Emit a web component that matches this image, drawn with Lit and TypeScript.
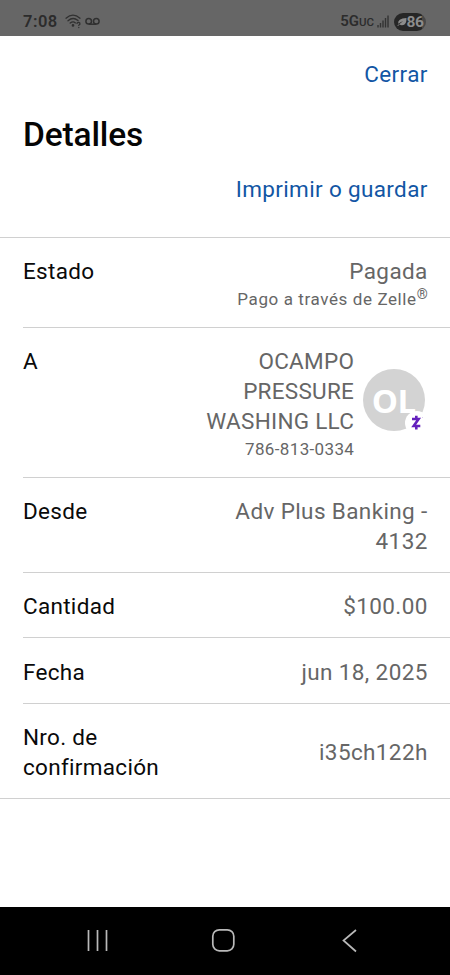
import { LitElement, html, css } from "lit";
import { customElement } from "lit/decorators.js";

@customElement("status-bar")
class StatusBar extends LitElement {
  static styles = css`
    :host { display: flex; flex: none; height: 35.5px; box-sizing: border-box; padding: 8px 24px 0 23px; background: #666; color: #2c2c2c; justify-content: space-between; align-items: center; font-family: Roboto, sans-serif; }
    .side { display: flex; align-items: center; }
    .time { font-size: 16.5px; font-weight: 600; letter-spacing: 0.5px; line-height: 18px; }
    .wifi { margin-left: 7px; }
    .vm { margin-left: 2px; }
    .net { font-size: 15px; font-weight: 600; line-height: 18px; }
    .uc { font-size: 11.5px; font-weight: 500; }
    .bars { margin-left: 3px; }
    .batt { margin-left: 5px; width: 32px; height: 18px; border-radius: 9px; background: linear-gradient(90deg, #262626 86%, #484848 86%); color: #8c8c8c; display: flex; align-items: center; justify-content: center; font-size: 15.5px; font-weight: 700; line-height: 18px; letter-spacing: -0.4px; }
  `;
  render() {
    return html`
      <div class="side">
        <span class="time">7:08</span>
        <svg class="wifi" width="18" height="15" viewBox="0 0 18 15" fill="none" stroke="#303030" stroke-width="1.3" stroke-linecap="round">
          <path d="M1 4.2Q8 -1.8 15 4.2M3 6.8Q8 2.4 13 6.6M5.2 9.1Q8 6.9 10.4 8.9" />
          <circle cx="8" cy="11.4" r="0.7" fill="#303030" />
          <path d="M12 9.3Q13.5 7.7 14.8 9Q15.5 10.3 13.8 11.3M13.8 13.4v.1" />
        </svg>
        <svg class="vm" width="15" height="9" viewBox="0 0 15 9" fill="none" stroke="#303030" stroke-width="1.5">
          <circle cx="3.7" cy="4.3" r="2.8" /><circle cx="11.3" cy="4.3" r="2.8" /><path d="M3.7 7.2h7.6" />
        </svg>
      </div>
      <div class="side">
        <span class="net">5G<span class="uc">UC</span></span>
        <svg class="bars" width="12" height="13" viewBox="0 0 12 13" stroke="#333" stroke-width="1.4">
          <path d="M1 12.5V10M3.5 12.5V8M6 12.5V5.5M8.5 12.5V3M11 12.5V.5" />
        </svg>
        <span class="batt">
          <svg width="10" height="10" viewBox="0 0 10 10"><path d="M9.5 1Q9.8 8.5 4.8 8.2Q3.2 8 2.7 7.2L1 9L.3 8.4Q4 5.8 6.2 3.9Q3.5 4.8 1.2 6.8Q.3 1.6 9.5 1Z" fill="#8c8c8c" /></svg>86
        </span>
      </div>
    `;
  }
}

@customElement("detail-row")
class DetailRow extends LitElement {
  static properties = { label: {} };
  declare label: string;
  static styles = css`
    :host { display: flex; justify-content: space-between; align-items: center; margin-left: 23px; padding: 19.3px 22.3px 15.4px 0; border-bottom: 1px solid #d0d0d0; }
    :host([last]) { margin-left: 0; padding-left: 23px; }
    .label { align-self: flex-start; color: #0a0a0a; width: 160px; letter-spacing: 0.3px; }
    .value { color: #666; text-align: right; letter-spacing: 0.38px; }
  `;
  render() {
    return html`<div class="label">${this.label}</div><div class="value"><slot></slot></div>`;
  }
}

@customElement("app-root")
class AppRoot extends LitElement {
  static styles = css`
    :host { display: flex; flex-direction: column; height: 975px; background: #fff; font-family: Roboto, sans-serif; font-size: 22.5px; line-height: 29.75px; overflow: hidden; }
    .head { height: 202.5px; box-sizing: border-box; border-bottom: 1px solid #d0d0d0; padding: 24px 22.3px 0 23px; display: flex; flex-direction: column; flex: none; }
    .link { align-self: flex-end; color: #1256a4; letter-spacing: 0.35px; }
    h1 { margin: 26px 0 20px; font-size: 33.5px; line-height: 40px; font-weight: 500; letter-spacing: -0.15px; color: #050505; }
    .name { letter-spacing: 0.28px; }
    .small { font-size: 17px; line-height: 24.7px; letter-spacing: 0.6px; }
    .phone { letter-spacing: 0.35px; }
    sup { font-size: 14px; line-height: 0; vertical-align: 6px; letter-spacing: 0; }
    .payee { display: flex; align-items: center; gap: 8.5px; }
    .avatar { position: relative; width: 62px; height: 62px; margin-right: 3px; margin-top: -8px; border-radius: 50%; background: #d3d3d3; color: #fff; font: 700 33px/63px "Open Sans", sans-serif; text-align: center; letter-spacing: -0.4px; }
    .badge { position: absolute; left: 42px; top: 42px; width: 24px; height: 24px; border-radius: 50%; background: #fff; }
    .badge svg { display: block; }
    .body { flex: 1; }
    .nav { flex: none; height: 67.7px; background: #000; }
    .nav svg { display: block; }
  `;
  render() {
    return html`
      <status-bar></status-bar>
      <div class="head">
        <span class="link">Cerrar</span>
        <h1>Detalles</h1>
        <span class="link">Imprimir o guardar</span>
      </div>
      <div class="body">
        <detail-row label="Estado">
          <div>Pagada</div>
          <div class="small">Pago a través de Zelle<sup>®</sup></div>
        </detail-row>
        <detail-row label="A">
          <div class="payee">
            <div>
              <div class="name">OCAMPO<br />PRESSURE<br />WASHING LLC</div>
              <div class="small phone">786-813-0334</div>
            </div>
            <div class="avatar">OL
              <div class="badge">
                <svg width="24" height="24" viewBox="0 0 24 24" fill="none" stroke="#6420bd" stroke-width="2.6">
                  <path d="M7 8H13.6L8.7 15H15.3M11.3 4.8V8M11.3 15V18.6" />
                  <circle cx="17.5" cy="6.7" r=".4" stroke="none" fill="#9a76cc" />
                </svg>
              </div>
            </div>
          </div>
        </detail-row>
        <detail-row label="Desde">Adv Plus Banking -<br />4132</detail-row>
        <detail-row label="Cantidad">$100.00</detail-row>
        <detail-row label="Fecha">jun 18, 2025</detail-row>
        <detail-row last label="Nro. de confirmación">i35ch122h</detail-row>
      </div>
      <div class="nav">
        <svg width="450" height="68" viewBox="0 0 450 68" fill="none" stroke="#b9b9b9" stroke-width="1.7">
          <path d="M88.5 23V44M97.5 23V44M106.5 23V44" />
          <rect x="212.8" y="22.8" width="21" height="21" rx="6.5" />
          <path d="M356 23L343.5 33.5L356 44.5" />
        </svg>
      </div>
    `;
  }
}
